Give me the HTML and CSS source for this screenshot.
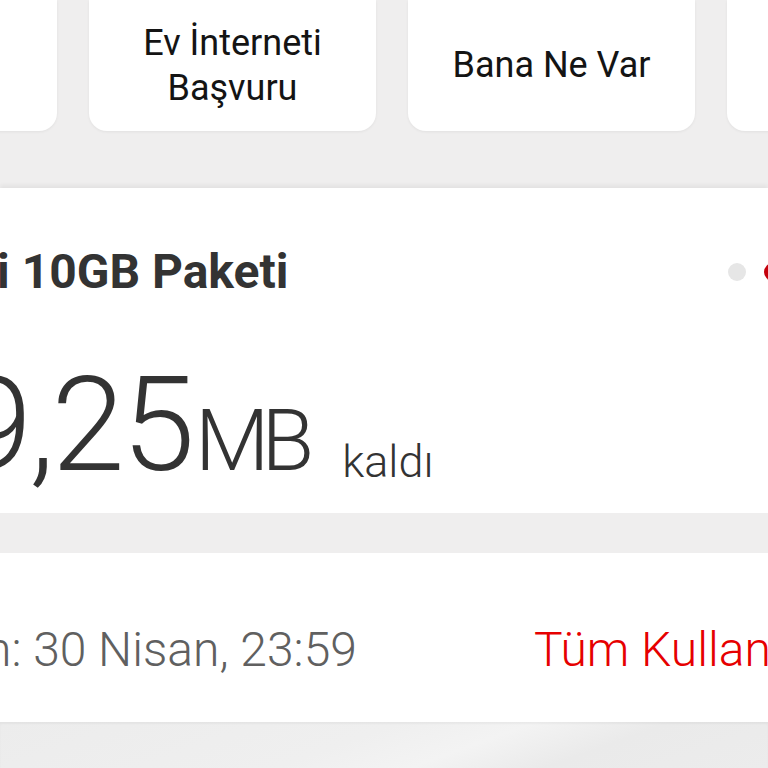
FILE: index.html
```html
<!DOCTYPE html>
<html lang="tr">
<head>
<meta charset="utf-8">
<title>Paketlerim</title>
<link rel="stylesheet" href="styles.css">
</head>
<body>
<div class="page">
  <div class="tiles">
    <div class="tile"></div>
    <div class="tile"><span>Ev İnterneti<br>Başvuru</span></div>
    <div class="tile"><span>Bana Ne Var</span></div>
    <div class="tile"></div>
  </div>

  <section class="card usage">
    <div class="usage-head">
      <h2 class="pkg-title">i 10GB Paketi</h2>
      <div class="dots">
        <span class="dot"></span>
        <span class="dot active"></span>
      </div>
    </div>
    <div class="amount">
      <span class="num">9,25</span><span class="unit">MB</span><span class="left">kaldı</span>
    </div>
  </section>

  <section class="card renew">
    <span class="date">n: 30 Nisan, 23:59</span>
    <a class="all-link">Tüm Kullanımlar</a>
  </section>

  <div class="footer-band"></div>
</div>
</body>
</html>
```

FILE: styles.css
```css
html, body {
  margin: 0;
  padding: 0;
}

body {
  width: 768px;
  height: 768px;
  overflow: hidden;
  background: #efeeee;
  font-family: Roboto, "Liberation Sans", sans-serif;
}

.page {
  width: 768px;
  overflow: hidden;
}

.tiles {
  display: flex;
  gap: 32px;
  margin-left: -230px;
  height: 131px;
}

.tile {
  flex: 0 0 287px;
  height: 131px;
  background: #fff;
  border-radius: 0 0 18px 18px;
  box-shadow: 0 1px 3px rgba(0, 0, 0, 0.06);
  display: flex;
  align-items: center;
  justify-content: center;
  text-align: center;
  font-size: 36px;
  line-height: 45px;
  color: #141414;
}

.card {
  background: #fff;
  overflow: hidden;
}

.usage {
  margin-top: 57px;
  height: 325px;
  box-shadow: 0 -3px 4px rgba(0, 0, 0, 0.05);
  padding-top: 60px;
  box-sizing: border-box;
}

.usage-head {
  display: flex;
  justify-content: space-between;
  align-items: center;
  height: 48px;
}

.pkg-title {
  margin: 0 0 0 -3px;
  font-size: 48px;
  line-height: 48px;
  font-weight: 700;
  color: #333;
  white-space: nowrap;
}

.dots {
  display: flex;
  gap: 18px;
  margin-right: -14px;
}

.dot {
  width: 18px;
  height: 18px;
  border-radius: 50%;
  background: #e6e6e6;
}

.dot.active {
  background: #c4000b;
}

.amount {
  margin-top: 63px;
  margin-left: -41px;
  white-space: nowrap;
  color: #333;
  line-height: 132px;
  height: 132px;
}

.num {
  font-size: 132px;
  font-weight: 300;
  letter-spacing: -3px;
}

.unit {
  font-size: 86px;
  font-weight: 300;
  letter-spacing: -8px;
  margin-left: 3px;
}

.left {
  font-size: 45px;
  font-weight: 300;
  margin-left: 36px;
  vertical-align: -7px;
}

.renew {
  margin-top: 40px;
  height: 169px;
  box-sizing: border-box;
  padding-top: 73px;
  display: flex;
  align-items: flex-start;
  white-space: nowrap;
  font-size: 48px;
  line-height: 48px;
  font-weight: 300;
}

.date {
  color: #606060;
  margin-left: -15px;
}

.all-link {
  color: #e60000;
  margin-left: 177px;
}

.footer-band {
  height: 46px;
  background: linear-gradient(160deg, #ececec 0%, #efefef 45%, #f3f3f3 60%, #eaeaea 75%, #ececec 100%);
  box-shadow: inset 0 2px 2px rgba(0, 0, 0, 0.04);
}
```
